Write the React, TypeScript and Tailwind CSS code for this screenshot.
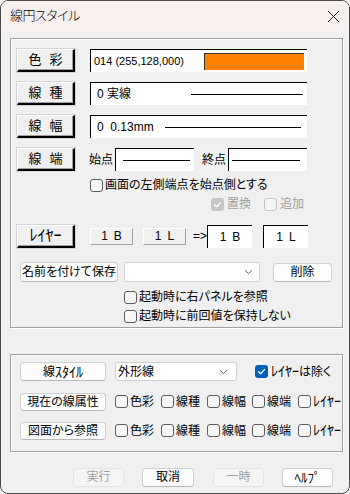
import React from 'react';

// old style 3D push button (色彩 / 線種 ...)
const OldButton = ({ children, className = '' }: { children: React.ReactNode; className?: string }) => (
  <div
    className={`w-[58px] h-[23px] shrink-0 flex items-center justify-center text-[13px] text-black bg-[#f0f0f0] border-t border-l border-t-white border-l-white border-r-2 border-b-2 border-r-black border-b-black shadow-[inset_-1px_-1px_0_#a0a0a0,0_0_0_1px_#d4d4d4] ${className}`}
  >
    {children}
  </div>
);

// flat small button (1 B / 1 L)
const FlatButton = ({ children, className = '' }: { children: React.ReactNode; className?: string }) => (
  <div
    className={`h-[17px] shrink-0 flex items-center justify-center text-[12px] bg-[#f0f0f0] border border-t-white border-l-white border-r-[#a0a0a0] border-b-[#a0a0a0] ${className}`}
  >
    {children}
  </div>
);

// modern (win11) button
const Button = ({ children, className = '', disabled = false }: { children: React.ReactNode; className?: string; disabled?: boolean }) => (
  <div
    className={`shrink-0 flex items-center justify-center rounded-[4px] text-[12px] border ${
      disabled
        ? 'bg-[#f5f5f5] border-[#e5e5e5] text-[#a0a0a0]'
        : 'bg-[#fdfdfd] border-[#d0d0d0] border-b-[#b8b8b8] text-black'
    } ${className}`}
  >
    {children}
  </div>
);

// half-width katakana: no proportional metrics
const Han = ({ children, className = '' }: { children: React.ReactNode; className?: string }) => (
  <span className={`[font-feature-settings:normal] leading-none ${className}`}>{children}</span>
);

const Check = ({ checked = false, disabled = false }: { checked?: boolean; disabled?: boolean }) => {
  if (checked) {
    return (
      <span
        className={`w-[13px] h-[13px] shrink-0 rounded-[3px] flex items-center justify-center ${
          disabled ? 'bg-[#c6c6c6]' : 'bg-[#005fb8]'
        }`}
      >
        <svg width="9" height="9" viewBox="0 0 9 9" fill="none">
          <path d="M1.5 4.8 L3.6 6.8 L7.6 2.4" stroke="white" strokeWidth="1.3" strokeLinecap="round" strokeLinejoin="round" />
        </svg>
      </span>
    );
  }
  return (
    <span
      className={`w-[13px] h-[13px] shrink-0 rounded-[3px] border ${
        disabled ? 'border-[#c6c6c6] bg-[#f5f5f5]' : 'border-[#5c5c5c] bg-[#f7f7f7]'
      }`}
    />
  );
};

const Chevron = () => (
  <svg width="9" height="6" viewBox="0 0 9 6" fill="none">
    <path d="M1 1.2 L4.5 4.6 L8 1.2" stroke="#5c5c5c" strokeWidth="1" />
  </svg>
);

const Field = ({ children, className = '' }: { children?: React.ReactNode; className?: string }) => (
  <div className={`h-[23px] shrink-0 bg-white border-t border-l border-black flex items-center ${className}`}>{children}</div>
);

const CheckItem = ({ label, className = '' }: { label: React.ReactNode; className?: string }) => (
  <div className={`flex items-center gap-[2px] shrink-0 ${className}`}>
    <Check />
    <span className="text-[12px] whitespace-nowrap">{label}</span>
  </div>
);

const AttrChecks = () => (
  <div className="ml-[9px] flex">
    <CheckItem className="w-[46px]" label="色彩" />
    <CheckItem className="w-[46px]" label="線種" />
    <CheckItem className="w-[45px]" label="線幅" />
    <CheckItem className="w-[46px]" label="線端" />
    <CheckItem label={<Han className="text-[14px]">ﾚｲﾔｰ</Han>} />
  </div>
);

export default function App() {
  return (
    <div className="w-[350px] h-[494px] bg-white font-['Liberation_Sans','Noto_Sans_CJK_JP',sans-serif] [font-feature-settings:'palt'] text-black">
      <div className="h-full rounded-[8px] border border-[#4a4a4a] overflow-hidden flex flex-col bg-[#f0f0f0]">
        {/* title bar */}
        <div className="h-[30px] shrink-0 bg-[#f7f0ef] flex items-center justify-between pl-[9px] pr-[8px]">
          <span className="text-[13px] font-light tracking-[-0.5px]">線円スタイル</span>
          <svg width="13" height="13" viewBox="0 0 13 13" fill="none" className="mr-[1px]">
            <path d="M1 1 L12 12 M12 1 L1 12" stroke="#1a1a1a" strokeWidth="1" />
          </svg>
        </div>

        {/* top group */}
        <div className="mt-[7px] ml-[9px] w-[333px] h-[290px] shrink-0 border border-[#a0a0a0] shadow-[inset_1px_1px_0_#fff,1px_1px_0_#fff] flex flex-col pl-[6px] pt-[10px]">
          {/* 色彩 */}
          <div className="flex h-[23px]">
            <OldButton>
              <span className="flex gap-[8px]"><span>色</span><span>彩</span></span>
            </OldButton>
            <Field className="ml-[15px] w-[217px] pl-[3px] pr-[3px] justify-between">
              <span className="text-[11px]">014 (255,128,000)</span>
              <span className="w-[100px] h-[17px] bg-[#ff8000] border-t border-l border-[#333]" />
            </Field>
          </div>
          {/* 線種 */}
          <div className="flex h-[23px] mt-[10px]">
            <OldButton>
              <span className="flex gap-[8px]"><span>線</span><span>種</span></span>
            </OldButton>
            <Field className="ml-[15px] w-[217px] pl-[6px] pr-[4px]">
              <span className="text-[12px] whitespace-nowrap">0 実線</span>
              <span className="ml-[60px] flex-1 h-px bg-black" />
            </Field>
          </div>
          {/* 線幅 */}
          <div className="flex h-[23px] mt-[10px]">
            <OldButton>
              <span className="flex gap-[8px]"><span>線</span><span>幅</span></span>
            </OldButton>
            <Field className="ml-[15px] w-[217px] pl-[6px] pr-[6px]">
              <span className="text-[12px] whitespace-nowrap">0&nbsp;&nbsp;0.13mm</span>
              <span className="ml-[11px] flex-1 h-px bg-black" />
            </Field>
          </div>
          {/* 線端 */}
          <div className="flex h-[23px] mt-[10px] items-center">
            <OldButton>
              <span className="flex gap-[8px]"><span>線</span><span>端</span></span>
            </OldButton>
            <span className="ml-[14px] w-[26px] text-[12px]">始点</span>
            <Field className="w-[79px] pl-[7px] pr-[4px]">
              <span className="flex-1 h-px bg-black" />
            </Field>
            <span className="ml-[8px] w-[26px] text-[12px]">終点</span>
            <Field className="w-[79px] pl-[3px] pr-[7px]">
              <span className="flex-1 h-px bg-black" />
            </Field>
          </div>
          {/* 左側端点 */}
          <div className="flex h-[16px] mt-[6px] items-center">
            <CheckItem className="ml-[73px]" label="画面の左側端点を始点側とする" />
          </div>
          {/* 置換 追加 */}
          <div className="flex h-[16px] mt-[3px] items-center">
            <div className="ml-[194px] flex items-center gap-[3px]">
              <Check checked disabled />
              <span className="text-[12px] text-[#a0a0a0]">置換</span>
            </div>
            <div className="ml-[13px] flex items-center gap-[3px]">
              <Check disabled />
              <span className="text-[12px] text-[#a0a0a0]">追加</span>
            </div>
          </div>
          {/* レイヤー */}
          <div className="flex h-[22px] mt-[13px] items-center">
            <OldButton className="h-[22px]">
              <Han className="text-[16px]">ﾚｲﾔｰ</Han>
            </OldButton>
            <FlatButton className="ml-[15px] w-[43px]">1&ensp;B</FlatButton>
            <FlatButton className="ml-[10px] w-[43px]">1&ensp;L</FlatButton>
            <span className="ml-[7px] w-[14px] text-[12px]">=&gt;</span>
            <Field className="h-[20px] w-[45px] justify-center text-[12px]">1&ensp;B</Field>
            <Field className="ml-[11px] h-[20px] w-[45px] justify-center text-[12px]">1&ensp;L</Field>
          </div>
          {/* 名前を付けて保存 */}
          <div className="flex h-[20px] mt-[15px] items-center">
            <Button className="ml-[3px] w-[98px] h-[20px]">名前を付けて保存</Button>
            <div className="ml-[6px] w-[136px] h-[20px] bg-white border border-[#d0d0d0] rounded-[3px] flex items-center justify-end pr-[6px]">
              <Chevron />
            </div>
            <Button className="ml-[13px] w-[59px] h-[19px]">削除</Button>
          </div>
          <div className="flex h-[16px] mt-[7px] items-center">
            <CheckItem className="ml-[107px]" label="起動時に右パネルを参照" />
          </div>
          <div className="flex h-[16px] mt-[3px] items-center">
            <CheckItem className="ml-[107px]" label="起動時に前回値を保持しない" />
          </div>
        </div>

        {/* bottom group */}
        <div className="mt-[26px] ml-[9px] w-[333px] h-[98px] shrink-0 border border-[#a0a0a0] shadow-[inset_1px_1px_0_#fff,1px_1px_0_#fff] flex flex-col pl-[9px] pt-[7px] overflow-hidden">
          <div className="flex h-[19px] items-center">
            <Button className="w-[86px] h-[19px]">
              線<Han className="text-[14px]">ｽﾀｲﾙ</Han>
            </Button>
            <div className="ml-[9px] w-[122px] h-[19px] bg-white border border-[#d0d0d0] rounded-[3px] flex items-center justify-between pl-[2px] pr-[8px]">
              <span className="text-[12px]">外形線</span>
              <Chevron />
            </div>
            <div className="ml-[18px] flex items-center gap-[3px]">
              <Check checked />
              <span className="text-[12px] whitespace-nowrap">
                <Han className="text-[14px]">ﾚｲﾔｰ</Han>は除く
              </span>
            </div>
          </div>
          <div className="flex h-[19px] mt-[11px] items-center">
            <Button className="w-[86px] h-[18px]">現在の線属性</Button>
            <AttrChecks />
          </div>
          <div className="flex h-[19px] mt-[10px] items-center">
            <Button className="w-[86px] h-[18px]">図面から参照</Button>
            <AttrChecks />
          </div>
        </div>

        {/* dialog buttons */}
        <div className="flex mt-[15px] h-[20px] items-center">
          <Button disabled className="ml-[72px] w-[51px] h-[19px]">実行</Button>
          <Button className="ml-[18px] w-[52px] h-[19px]">取消</Button>
          <Button disabled className="ml-[19px] w-[51px] h-[19px]">一時</Button>
          <Button className="ml-[18px] w-[51px] h-[19px]">
            <Han className="text-[13px]">ﾍﾙﾌﾟ</Han>
          </Button>
        </div>
      </div>
    </div>
  );
}
